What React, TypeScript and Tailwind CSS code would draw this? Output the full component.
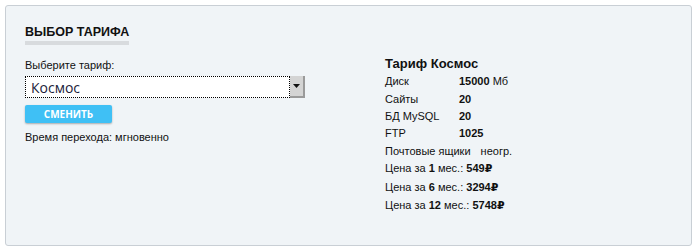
export default function App() {
  const specs = [
    { label: 'Диск', value: '15000', unit: ' Мб' },
    { label: 'Сайты', value: '20' },
    { label: 'БД MySQL', value: '20' },
    { label: 'FTP', value: '1025' },
  ]

  const prices = [
    { months: '1', price: '549' },
    { months: '6', price: '3294' },
    { months: '12', price: '5748' },
  ]

  return (
    <div className="h-[250px] w-[695px] bg-white p-[5px] font-['Liberation_Sans',Arial,sans-serif] text-[11px] text-[#111]">
      <div className="flex h-[241px] w-[687px] rounded-[3px] border border-[#c9cfd5] bg-[#f0f4f7] pl-[19px] pt-[18px]">
        {/* Left: tariff selection */}
        <div className="w-[360px]">
          <div className="inline-block border-b-[4px] border-[#d8dbde] pb-[2px]">
            <h2 className="text-[12.5px] leading-[14px] font-bold text-[#111]">ВЫБОР ТАРИФА</h2>
          </div>

          <p className="mt-[14px] leading-[13px]">Выберите тариф:</p>

          <div className="mt-[4px] flex h-[22px] w-[280px] items-stretch bg-white">
            <div className="flex flex-1 items-center border border-dotted border-black pl-[5px] font-['Open_Sans',sans-serif] text-[14px] text-[#1c1c3a]">
              Космос
            </div>
            <div className="flex w-[15px] items-center justify-center border-r-2 border-b-2 border-[#9a9a9a] bg-[#d4d4d4]">
              <svg width="7" height="4" viewBox="0 0 7 4">
                <path d="M0 0h7L3.5 4z" fill="#111" />
              </svg>
            </div>
          </div>

          <button className="mt-[7px] flex h-[18px] w-[87px] items-center justify-center rounded-[2px] bg-[#3fc0f5] font-['Open_Sans',sans-serif] text-[10px] font-bold text-white shadow-[0_1px_2px_rgba(0,0,0,0.3)]">
            СМЕНИТЬ
          </button>

          <p className="mt-[8px] leading-[13px]">Время перехода: мгновенно</p>
        </div>

        {/* Right: tariff details */}
        <div className="pt-[32px]">
          <h3 className="text-[13px] leading-[15px] font-bold">Тариф Космос</h3>
          <div className="mt-[2px]">
            {specs.map((s) => (
              <div key={s.label} className="flex h-[17.3px] items-center">
                <span className="w-[74px]">{s.label}</span>
                <span>
                  <b>{s.value}</b>
                  {s.unit}
                </span>
              </div>
            ))}
            <div className="flex h-[17.3px] items-center">
              <span>Почтовые ящики</span>
              <span className="ml-[10px]">неогр.</span>
            </div>
          </div>
          <div>
            {prices.map((p) => (
              <div key={p.months} className="flex h-[18.3px] items-center">
                Цена за&nbsp;<b>{p.months}</b>&nbsp;мес.:&nbsp;
                <b className="font-['Liberation_Sans','DejaVu_Sans',sans-serif]">{p.price}₽</b>
              </div>
            ))}
          </div>
        </div>
      </div>
    </div>
  )
}
